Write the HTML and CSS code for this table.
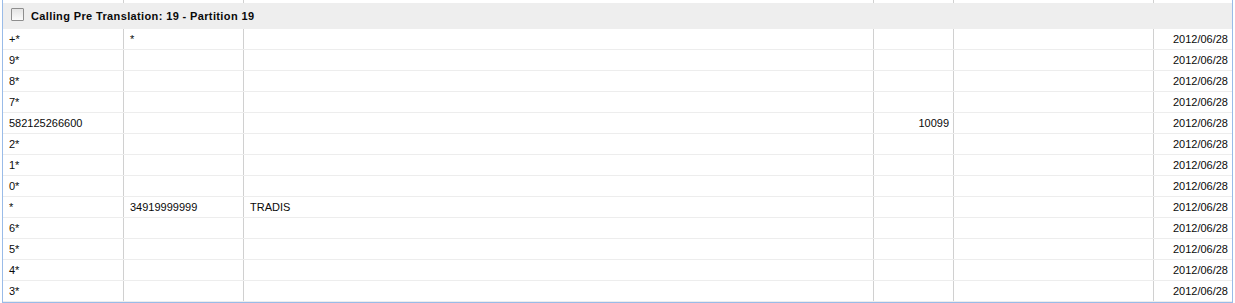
FILE: index.html
```html
<!DOCTYPE html>
<html>
<head>
<meta charset="utf-8">
<link rel="stylesheet" href="styles.css">
</head>
<body>
<div class="grid">
  <div class="row stub">
    <div class="c"></div><div class="c"></div><div class="c"></div><div class="c"></div><div class="c"></div><div class="c"></div>
  </div>
  <div class="group">
    <span class="check"></span>
    <span class="title">Calling Pre Translation: 19 - Partition 19</span>
  </div>
  <div class="row"><div class="c">+*</div><div class="c">*</div><div class="c"></div><div class="c r"></div><div class="c"></div><div class="c r">2012/06/28</div></div>
  <div class="row"><div class="c">9*</div><div class="c"></div><div class="c"></div><div class="c r"></div><div class="c"></div><div class="c r">2012/06/28</div></div>
  <div class="row"><div class="c">8*</div><div class="c"></div><div class="c"></div><div class="c r"></div><div class="c"></div><div class="c r">2012/06/28</div></div>
  <div class="row"><div class="c">7*</div><div class="c"></div><div class="c"></div><div class="c r"></div><div class="c"></div><div class="c r">2012/06/28</div></div>
  <div class="row"><div class="c">582125266600</div><div class="c"></div><div class="c"></div><div class="c r">10099</div><div class="c"></div><div class="c r">2012/06/28</div></div>
  <div class="row"><div class="c">2*</div><div class="c"></div><div class="c"></div><div class="c r"></div><div class="c"></div><div class="c r">2012/06/28</div></div>
  <div class="row"><div class="c">1*</div><div class="c"></div><div class="c"></div><div class="c r"></div><div class="c"></div><div class="c r">2012/06/28</div></div>
  <div class="row"><div class="c">0*</div><div class="c"></div><div class="c"></div><div class="c r"></div><div class="c"></div><div class="c r">2012/06/28</div></div>
  <div class="row"><div class="c">*</div><div class="c">34919999999</div><div class="c">TRADIS</div><div class="c r"></div><div class="c"></div><div class="c r">2012/06/28</div></div>
  <div class="row"><div class="c">6*</div><div class="c"></div><div class="c"></div><div class="c r"></div><div class="c"></div><div class="c r">2012/06/28</div></div>
  <div class="row"><div class="c">5*</div><div class="c"></div><div class="c"></div><div class="c r"></div><div class="c"></div><div class="c r">2012/06/28</div></div>
  <div class="row"><div class="c">4*</div><div class="c"></div><div class="c"></div><div class="c r"></div><div class="c"></div><div class="c r">2012/06/28</div></div>
  <div class="row"><div class="c">3*</div><div class="c"></div><div class="c"></div><div class="c r"></div><div class="c"></div><div class="c r">2012/06/28</div></div>
</div>
</body>
</html>
```

FILE: styles.css
```css
html, body {
  margin: 0;
  padding: 0;
  background: #fff;
}
body {
  font-family: "Liberation Sans", Arial, sans-serif;
  font-size: 11px;
  color: #0a0a0a;
}
.grid {
  margin-left: 2px;
  width: 1231px;
  box-sizing: border-box;
  border: 1px solid #99bbe8;
  border-top: none;
}
.row {
  display: grid;
  grid-template-columns: 121px 120px 630px 80px 200px 78px;
  height: 21px;
  box-sizing: border-box;
  border-bottom: 1px solid #ededed;
}
.row.stub {
  height: 3px;
  border-bottom: none;
}
.c {
  box-sizing: border-box;
  border-right: 1px solid #d0d0d0;
  padding: 0 6px;
  line-height: 20px;
  white-space: nowrap;
  overflow: hidden;
}
.c:last-child {
  border-right: none;
}
.c.r {
  text-align: right;
  padding-right: 4px;
}
.group {
  height: 26px;
  background: #eeeeee;
  display: flex;
  align-items: center;
  padding-left: 8px;
  gap: 7px;
  box-sizing: border-box;
}
.check {
  width: 13px;
  height: 13px;
  box-sizing: border-box;
  border: 1px solid #8e8e8e;
  background: linear-gradient(#e4e4e4, #fbfbfb);
  border-radius: 1px;
  margin-top: -3px;
}
.title {
  font-weight: bold;
  letter-spacing: 0.37px;
  color: #0a0a0a;
}
```
